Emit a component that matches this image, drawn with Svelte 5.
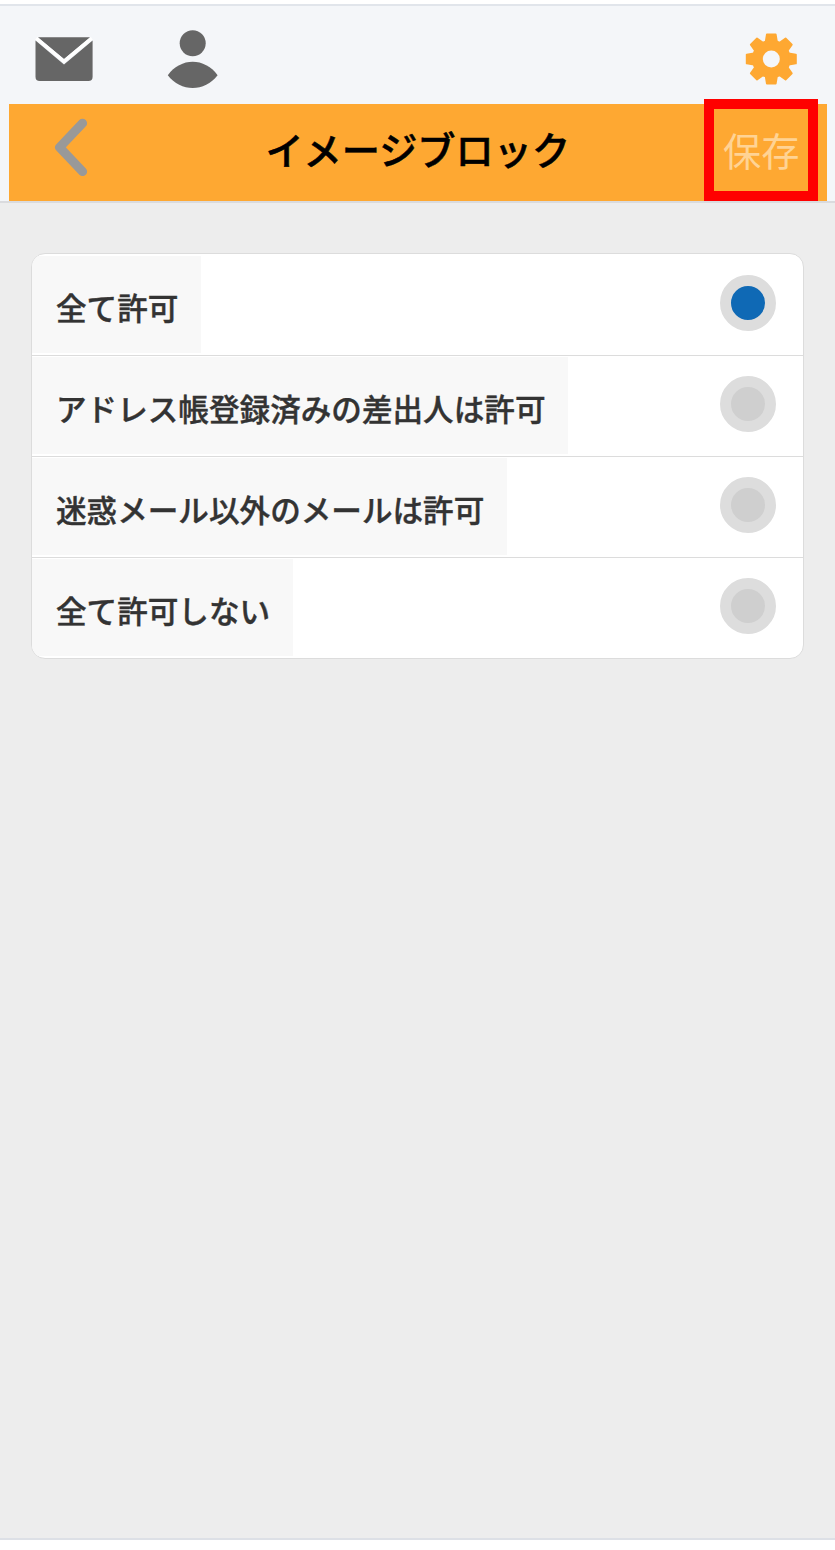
<script>
  const options = [
    '全て許可',
    'アドレス帳登録済みの差出人は許可',
    '迷惑メール以外のメールは許可',
    '全て許可しない'
  ];
  let selected = $state(0);
</script>

<div class="screen">
  <header>
    <nav>
      <svg class="mail" width="58" height="45" viewBox="0 0 58 45" aria-label="メール">
        <path fill="#666" d="M3 .3H55L29 22ZM.5 3.500L29 27.500L57.600 3.500V39.800Q57.600 44.100 53.300 44.100H4.800Q.5 44.100 .5 39.800Z" />
        <path fill="none" stroke="#fff" stroke-width="3.200" d="M1.200 1.200L29 24.200L56.800 1.200" />
      </svg>
      <svg class="person" width="52" height="60" viewBox="0 0 52 60" aria-label="連絡先">
        <circle cx="25.700" cy="13.300" r="13" fill="#666" />
        <path fill="#666" d="M.8 45.300C13.700 27.300 37.700 27.300 50.600 45.300C37.700 62.300 13.700 62.300 .8 45.300Z" />
      </svg>
      <svg class="gear" width="52" height="52" viewBox="-26.300 -26 52 52" aria-label="設定">
        <g fill="#fea832">
          <circle r="19.300" />
          {#each [0, 45, 90, 135, 180, 225, 270, 315] as angle}
            <path transform="rotate({angle})" d="M-6.500 -17.500L-5.300 -24.700Q-5.200 -25.500 -4.400 -25.500H4.400Q5.200 -25.500 5.300 -24.700L6.500 -17.500Z" />
          {/each}
        </g>
        <circle r="8.500" fill="#f4f6f9" />
      </svg>
    </nav>
    <div class="titlebar">
      <button class="back" aria-label="戻る">
        <svg width="34" height="58" viewBox="0 0 34 58">
          <path d="M28.600 5.200L5.600 29.400L28.600 53.600" fill="none" stroke="#999" stroke-width="9" stroke-linecap="round" stroke-linejoin="round" />
        </svg>
      </button>
      <h1>イメージブロック</h1>
      <button class="save">保存</button>
    </div>
  </header>
  <main>
    <div class="card">
      {#each options as option, i}
        <button class="row" onclick={() => (selected = i)}>
          <span class="label">{option}</span>
          <span class="radio" class:on={selected === i}></span>
        </button>
      {/each}
    </div>
  </main>
</div>

<style>
  :global(body) {
    margin: 0;
    background: #fff;
  }
  .screen {
    box-sizing: border-box;
    height: 1550px;
    padding: 4px 0 10px;
    display: flex;
    flex-direction: column;
    font-family: "Noto Sans CJK JP", sans-serif;
  }
  button {
    border: 0;
    padding: 0;
    margin: 0;
    background: none;
    font: inherit;
    color: inherit;
    text-align: left;
  }
  svg {
    display: block;
  }
  header {
    box-sizing: border-box;
    height: 199px;
    border-top: 2px solid #e1e5eb;
    border-bottom: 2px solid #dadbde;
    background: #f4f6f9;
  }
  nav {
    box-sizing: border-box;
    height: 98px;
    display: flex;
    align-items: flex-start;
    padding: 24px 38px 0 35px;
  }
  .mail {
    margin-top: 7px;
  }
  .person {
    margin-left: 74px;
  }
  .gear {
    margin: 3px 0 0 auto;
  }
  .titlebar {
    box-sizing: border-box;
    height: 97px;
    margin: 0 8px 0 8.500px;
    background: #fea832;
    display: grid;
    grid-template-columns: 1fr auto 1fr;
  }
  .back {
    margin: 14px 0 0 45.500px;
    align-self: start;
    justify-self: start;
  }
  h1 {
    margin: 0;
    font-size: 38.200px;
    line-height: 90px;
    font-weight: 500;
    color: #000;
    -webkit-text-stroke: 0.5px #000;
  }
  .save {
    box-sizing: border-box;
    width: 114px;
    height: 102px;
    margin: -5px 9px 0 0;
    justify-self: end;
    border: 10px solid #f00;
    padding-left: 9px;
    font-size: 38.200px;
    line-height: 82px;
    color: #ffd394;
    white-space: nowrap;
  }
  main {
    flex: 1;
    padding: 50px 31px 0 31px;
    background: #ededed;
    border-bottom: 2px solid #dde0e6;
  }
  .card {
    border: 1px solid #dcdcdc;
    border-radius: 14px;
    overflow: hidden;
    background: #fff;
    display: grid;
    grid-template-rows: repeat(4, 101px);
  }
  .row {
    box-sizing: border-box;
    display: flex;
    justify-content: space-between;
    align-items: flex-start;
    padding: 2px 27.500px 2px 0;
  }
  .row + .row {
    padding-top: 1px;
    border-top: 1px solid #dcdcdc;
  }
  .label {
    box-sizing: border-box;
    height: 97px;
    padding: 0 22.500px 0 24px;
    background: #f8f8f8;
    color: #333;
    font-size: 30.600px;
    line-height: 102px;
    font-weight: 500;
    -webkit-text-stroke: 0.4px #333;
    white-space: nowrap;
  }
  .radio {
    box-sizing: border-box;
    width: 56px;
    height: 56px;
    margin-top: 19px;
    border: 11px solid #ddd;
    border-radius: 50%;
    background: #cfcfcf;
  }
  .radio.on {
    background: #0f69b5;
  }
</style>
